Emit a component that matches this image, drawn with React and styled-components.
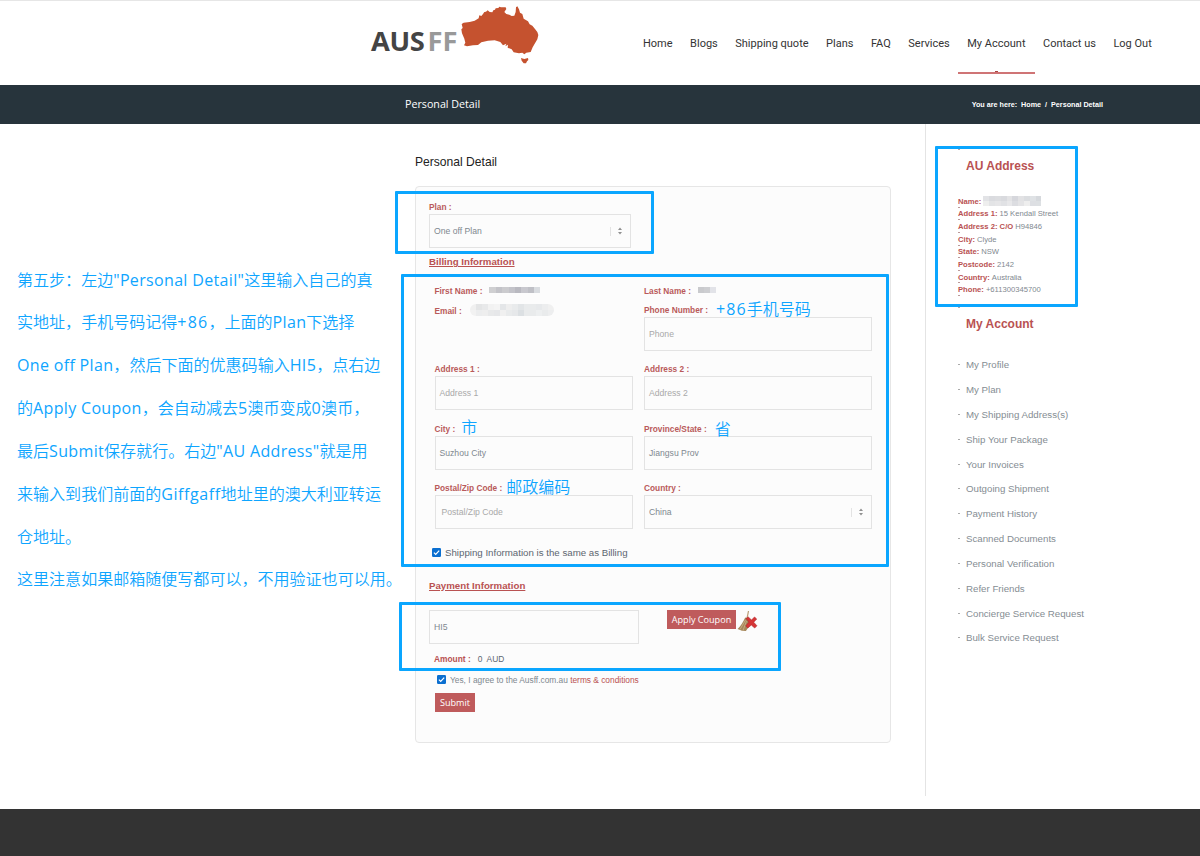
import React from "react";
import styled, { createGlobalStyle, css } from "styled-components";

const GlobalStyle = createGlobalStyle`
  * {
    box-sizing: border-box;
  }
  body {
    margin: 0;
    background: #fff;
    font-family: "Liberation Sans", Arial, sans-serif;
  }
`;

const Page = styled.div`
  position: relative;
  width: 1200px;
  height: 856px;
  overflow: hidden;
  display: flex;
  flex-direction: column;
`;

const Header = styled.header`
  height: 85px;
  flex-shrink: 0;
  display: flex;
  border-top: 1px solid #e6e6e6;
  padding-left: 370px;
`;

const Logo = styled.div`
  display: flex;
  width: 273px;
  padding-top: 4px;
`;

const LogoText = styled.div`
  width: 90px;
  padding: 17px 0 0 1px;
  font: 700 27.3px/38px "Open Sans", sans-serif;
  letter-spacing: -0.3px;
  color: #444;
  white-space: nowrap;
`;

const LogoLight = styled.span`
  margin-left: 3px;
  font-weight: 700;
  letter-spacing: -0.2px;
  color: #999;
`;

const Nav = styled.nav`
  display: flex;
  gap: 17.5px;
  height: 73px;
`;

const NavItem = styled.a`
  font: 400 11px/85px Roboto, sans-serif;
  color: #333;
  white-space: nowrap;
  ${({ $active }) =>
    $active &&
    css`
      margin: 0 -9px;
      padding: 0 9px;
      border-bottom: 2px solid #cf7475;
      background: linear-gradient(#a94442, #a94442) 50% 100% / 3px 1px no-repeat;
    `}
`;

const TitleBar = styled.div`
  height: 39px;
  flex-shrink: 0;
  display: flex;
  justify-content: space-between;
  padding: 0 97px 0 405px;
  background: #27343c;
  color: #fff;
`;

const BarTitle = styled.div`
  font: 400 10.7px/39px "Open Sans", sans-serif;
`;

const Crumbs = styled.div`
  display: flex;
  gap: 4px;
  font-size: 7.2px;
  font-weight: 700;
  line-height: 39px;
`;

const Main = styled.main`
  display: flex;
  height: 672px;
  flex-shrink: 0;
`;

const Note = styled.div`
  width: 415px;
  padding: 134.5px 0 0 17px;
  color: #0ea5ff;
  font: 400 16.05px/42.85px "Open Sans", "Noto Sans CJK SC", sans-serif;
  font-weight: 350;
  white-space: nowrap;
`;

const Latin = styled.span`
  font-weight: 400;
  letter-spacing: ${({ $ls }) => $ls || 0.32}px;
`;

const Content = styled.section`
  width: 509.5px;
  padding-top: 29px;
`;

const Heading = styled.h1`
  margin: 0;
  height: 33px;
  font-size: 12.1px;
  font-weight: 400;
  line-height: 18px;
  color: #222;
`;

const Card = styled.form`
  width: 476px;
  height: 557px;
  border: 1px solid #e6e6e6;
  border-radius: 4px;
  background: #fcfcfc;
  padding-left: 13px;
  color: #7f8c94;
`;

const Label = styled.label`
  display: flex;
  align-items: flex-end;
  height: ${({ $h }) => $h || 25.4}px;
  font-size: 8.3px;
  font-weight: 700;
  line-height: 14px;
  color: #b95a5a;
  white-space: nowrap;
`;

const Box = styled.div`
  display: flex;
  align-items: center;
  justify-content: space-between;
  width: ${({ $w }) => $w || "100%"};
  height: 34px;
  padding: 0 8px 0 ${({ $pl }) => $pl || 4}px;
  border: 1px solid #e3e3e3;
  font-size: 8.65px;
  color: ${({ $empty }) => ($empty ? "#a9a9a9" : "#7f8990")};
`;

const ArrowWrap = styled.span`
  display: flex;
  align-items: center;
  height: 9px;
  padding-left: 7px;
  border-left: 1px solid #e3e3e3;
`;

const SectionTitle = styled.h2`
  margin: ${({ $mt }) => $mt || 0}px 0 0;
  height: ${({ $h }) => $h}px;
  font-size: 9.7px;
  line-height: ${({ $lh }) => $lh}px;
  color: #b95252;
  text-decoration: underline;
`;

const Fields = styled.div`
  display: grid;
  grid-template-columns: 198.5px 228px;
  column-gap: 11px;
  margin-left: 5.5px;
`;

const NameRow = styled(Fields)`
  height: 20px;
  margin-top: 6px;
`;

const Inline = styled.div`
  display: flex;
  align-items: center;
  gap: ${({ $gap }) => $gap || 7}px;
  height: 20px;
`;

const Hint = styled.span`
  position: relative;
  top: ${({ $top }) => $top || 0}px;
  margin-left: ${({ $ml }) => $ml}px;
  font: 400 16px/15px "Open Sans", "Noto Sans CJK SC", sans-serif;
  font-weight: 350;
  color: #0ea5ff;
`;

const Mosaic = styled.span`
  display: inline-flex;
  flex-wrap: wrap;
  width: ${({ $w }) => $w}px;
  height: ${({ $h }) => $h}px;
  border-radius: ${({ $r }) => $r || 0}px;
  overflow: hidden;
`;

const Tile = styled.i`
  width: ${({ $w }) => $w}px;
  height: ${({ $h }) => $h}px;
  background: ${({ $c }) => $c};
`;

const CheckRow = styled.div`
  display: flex;
  align-items: center;
  gap: 4px;
  height: ${({ $h }) => $h}px;
  margin: ${({ $mt }) => $mt}px 0 0 ${({ $ml }) => $ml}px;
  font-size: ${({ $fs }) => $fs}px;
  color: ${({ $c }) => $c};
`;

const Terms = styled.span`
  color: #b95252;
`;

const CouponRow = styled.div`
  display: flex;
  align-items: flex-start;
  margin-top: 16px;
`;

const Button = styled.button`
  width: ${({ $w }) => $w}px;
  height: 19px;
  margin: ${({ $m }) => $m};
  padding: 0;
  border: 0;
  background: #bf5b5c;
  color: #fff;
  font: 500 9.1px/19px "Open Sans", sans-serif;
  white-space: nowrap;
`;

const Amount = styled.div`
  display: flex;
  gap: 7px;
  height: 16px;
  margin: 7px 0 0 5px;
  font-size: 8.4px;
  line-height: 16px;
  color: #5d6670;
  white-space: pre;
`;

const Red = styled.b`
  color: #b95252;
`;

const Sidebar = styled.aside`
  flex: 1;
  padding: 23px 0 0 32.5px;
  border-left: 1px solid #e4e4e4;
`;

const SideTitle = styled.h3`
  position: relative;
  margin: 0;
  padding-left: 8px;
  height: 48px;
  font-size: 12px;
  line-height: 38px;
  color: #b95252;
  &::before {
    content: "";
    position: absolute;
    left: 0;
    top: 2px;
    width: 2px;
    height: 1px;
    background: #b9a5a5;
  }
`;

const AddressLine = styled.div`
  position: relative;
  display: flex;
  align-items: center;
  gap: 2px;
  height: 12.65px;
  font-size: 7.65px;
  color: #7f8990;
  white-space: nowrap;
  &::after {
    content: "";
    position: absolute;
    left: 0;
    bottom: 0;
    width: 2px;
    height: 1px;
    background: #b99;
  }
`;

const Addresses = styled.div`
  height: 110px;
`;

const MenuItem = styled.a`
  display: flex;
  align-items: center;
  gap: 6px;
  height: 24.83px;
  font-size: 9.7px;
  color: #858d93;
  &::before {
    content: "";
    width: 2px;
    height: 1px;
    background: #aaa;
  }
`;

const Menu = styled.div`
  margin-top: -0.6px;
`;

const Footer = styled.footer`
  flex: 1;
  margin-top: 13px;
  background: #333;
`;

const Highlight = styled.div`
  position: absolute;
  left: ${({ $x }) => $x}px;
  top: ${({ $y }) => $y}px;
  width: ${({ $w }) => $w}px;
  height: ${({ $h }) => $h}px;
  border: 3px solid #0aa6ff;
  border-radius: 1px;
`;

const navItems = ["Home", "Blogs", "Shipping quote", "Plans", "FAQ", "Services", "My Account", "Contact us", "Log Out"];

const address = [
  ["Address 1:", "15 Kendall Street"],
  ["Address 2: C/O", "H94846"],
  ["City:", "Clyde"],
  ["State:", "NSW"],
  ["Postcode:", "2142"],
  ["Country:", "Australia"],
  ["Phone:", "+611300345700"],
];

const menu = [
  "My Profile",
  "My Plan",
  "My Shipping Address(s)",
  "Ship Your Package",
  "Your Invoices",
  "Outgoing Shipment",
  "Payment History",
  "Scanned Documents",
  "Personal Verification",
  "Refer Friends",
  "Concierge Service Request",
  "Bulk Service Request",
];

const highlights = [
  [395, 191, 259, 63],
  [401, 274, 488, 293],
  [399, 602, 382, 69],
  [935, 146, 143, 161],
];

const Pixels = ({ colors, w, h, tw, th, r }) => (
  <Mosaic $w={w} $h={h} $r={r}>
    {colors.map((c, i) => (
      <Tile key={i} $c={c} $w={tw} $h={th} />
    ))}
  </Mosaic>
);

const Australia = () => (
  <svg width="80" height="60" viewBox="301 15 240 180" fill="#c5522f">
    <path d="M306 72L312 68 330 66 345 62 357 55 359 46 365 48 370 42 374 36 379 35 384 31 390 36 398 37 401 31 406 29 408 25 416 24 419 20 424 22 438 22 440 27 434 36 440 42 449 44 456 48 464 47 468 36 469 22 473 19 478 28 481 38 488 42 492 56 505 64 510 73 518 77 526 87 533 96 536 105 533 118 526 130 519 142 513 156 500 158 494 163 488 158 478 160 462 157 456 148 444 143 445 134 437 139 440 131 430 136 422 126 405 121 385 122 365 127 355 135 340 136 322 139 313 136 317 128 314 116 307 100 305 88 309 84z" />
    <path d="M484 174L494 177 505 174 506 180 502 184 499 190 492 190 486 182z" />
  </svg>
);

const Arrows = () => (
  <ArrowWrap>
    <svg width="4" height="8" viewBox="0 0 4 8" fill="#909090">
      <path d="M0 3L2 .6 4 3zM0 5l2 2.4L4 5z" />
    </svg>
  </ArrowWrap>
);

const Check = () => (
  <svg width="9" height="9" viewBox="0 0 9 9">
    <rect width="9" height="9" rx="1.2" fill="#0b6fd0" />
    <path d="M1.9 4.7l1.8 1.8L7.2 2.6" fill="none" stroke="#fff" strokeWidth="1.2" />
  </svg>
);

const Broom = () => (
  <svg width="22" height="22" viewBox="0 0 22 22">
    <path d="M11.5 1l-1.6 8" stroke="#b79a72" strokeWidth="1.2" />
    <path d="M8.2 7.5l3.2 1.2 2.5 5-5 7.200-4-.2L.6 19c3.400-3.100 5.500-7 7.600-11.500z" fill="#a5875b" />
    <path d="M8.5 10L3 19.5M9.5 11L6 20.5" stroke="#d0b98f" strokeWidth=".7" />
    <path d="M9 8.5l2.3-1.5 3.200 3 3-3 2.200 2-3 3.200 3.200 3.600-2.200 2.200-3.400-3-3.500 3-2-2.200 3.200-3.700z" fill="#d53536" stroke="#b42429" strokeWidth=".6" />
  </svg>
);

const App = () => {
  return (
    <Page>
      <GlobalStyle />
      <Header>
        <Logo>
          <LogoText>
            AUS<LogoLight>FF</LogoLight>
          </LogoText>
          <Australia />
        </Logo>
        <Nav>
          {navItems.map((item) => (
            <NavItem key={item} $active={item === "My Account"}>
              {item}
            </NavItem>
          ))}
        </Nav>
      </Header>
      <TitleBar>
        <BarTitle>Personal Detail</BarTitle>
        <Crumbs>
          <span>You are here:</span>
          <span>Home</span>
          <span>/</span>
          <span>Personal Detail</span>
        </Crumbs>
      </TitleBar>
      <Main>
        <Note>
          <div>第五步：左边<Latin>"Personal Detail"</Latin>这里输入自己的真</div>
          <div>实地址，手机号码记得<Latin $ls={1.2}>+86</Latin>，上面的<Latin>Plan</Latin>下选择</div>
          <div><Latin>One off Plan</Latin>，然后下面的优惠码输入<Latin>HI5</Latin>，点右边</div>
          <div>的<Latin>Apply Coupon</Latin>，会自动减去<Latin>5</Latin>澳币变成<Latin>0</Latin>澳币，</div>
          <div>最后<Latin>Submit</Latin>保存就行。右边<Latin>"AU Address"</Latin>就是用</div>
          <div>来输入到我们前面的<Latin $ls={0.55}>Giffgaff</Latin>地址里的澳大利亚转运</div>
          <div>仓地址。</div>
          <div>这里注意如果邮箱随便写都可以，不用验证也可以用。</div>
        </Note>
        <Content>
          <Heading>Personal Detail</Heading>
          <Card>
            <Label $h={27}>Plan :</Label>
            <Box $w="202px">
              One off Plan <Arrows />
            </Box>
            <SectionTitle $h={26} $lh={27}>Billing Information</SectionTitle>
            <NameRow>
              <Inline>
                <Label $h={15}>First Name :</Label>
                <Pixels w={51} h={6} tw={6.375} th={6} colors={["#cfcfd1", "#c3c3c8", "#cbcbce", "#c3c3c9", "#b9b9c0", "#c8c8ce", "#bfc0c6", "#d9dce0"]} />
              </Inline>
              <Inline>
                <Label $h={15}>Last Name :</Label>
                <Pixels w={18} h={6} tw={6} th={6} colors={["#c9cacd", "#cdced1", "#e2e3e8"]} />
              </Inline>
            </NameRow>
            <Fields>
              <Inline $gap={8}>
                <Label $h={15}>Email :</Label>
                <Pixels w={84} h={12} tw={6} th={6} r={6} colors={["#f0f0f0", "#e4e5e6", "#e8e9ea", "#f2f2f2", "#f4f4f4", "#e4e6e8", "#eee", "#e9ebec", "#e2e5e7", "#e9ebec", "#e9ebec", "#e7e9eb", "#ecedee", "#f0f0f0", "#f2f2f2", "#ecedee", "#eee", "#e8e9ea", "#e6e7e9", "#f0f0f0", "#e9ebec", "#e6e8ea", "#dce0e3", "#e9ebec", "#e9ebec", "#edeff0", "#e9ebec", "#edeeef"]} />
              </Inline>
              <div>
                <Label $h={17}>
                  Phone Number :
                  <Hint $ml={8}>
                    <Latin $ls={1.1}>+86</Latin>手机号码
                  </Hint>
                </Label>
                <Box $empty>Phone</Box>
              </div>
              <div>
                <Label>Address 1 :</Label>
                <Box $empty>Address 1</Box>
              </div>
              <div>
                <Label>Address 2 :</Label>
                <Box $empty>Address 2</Box>
              </div>
              <div>
                <Label>
                  City :<Hint $ml={6} $top={-1}>市</Hint>
                </Label>
                <Box>Suzhou City</Box>
              </div>
              <div>
                <Label>
                  Province/State :<Hint $ml={8} $top={1}>省</Hint>
                </Label>
                <Box>Jiangsu Prov</Box>
              </div>
              <div>
                <Label>
                  Postal/Zip Code :<Hint $ml={4}>邮政编码</Hint>
                </Label>
                <Box $empty $pl={6}>Postal/Zip Code</Box>
              </div>
              <div>
                <Label>Country :</Label>
                <Box>
                  China <Arrows />
                </Box>
              </div>
            </Fields>
            <CheckRow $h={18} $mt={14.7} $ml={3} $fs={9.7} $c="#5d6670">
              <Check />
              Shipping Information is the same as Billing
            </CheckRow>
            <SectionTitle $h={16} $lh={16} $mt={16}>Payment Information</SectionTitle>
            <CouponRow>
              <Box $w="210px">HI5</Box>
              <Button type="button" $w={69} $m="0 1px 0 28px">Apply Coupon</Button>
              <Broom />
            </CouponRow>
            <Amount>
              <Red>Amount :</Red>
              <span>0  AUD</span>
            </Amount>
            <CheckRow $h={16} $mt={5} $ml={8} $fs={8.35} $c="#7f8990">
              <Check />
              <span>
                Yes, I agree to the Ausff.com.au <Terms>terms &amp; conditions</Terms>
              </span>
            </CheckRow>
            <Button type="button" $w={40} $m="5px 0 0 6px">Submit</Button>
          </Card>
        </Content>
        <Sidebar>
          <SideTitle>AU Address</SideTitle>
          <Addresses>
            <AddressLine>
              <Red>Name:</Red>
              <Pixels w={58} h={10} tw={5.8} th={5} colors={["#e2e3e6", "#dadbdf", "#dcdde0", "#d9dade", "#e3e3e5", "#d6d7dc", "#e2e2e4", "#dbdde0", "#dfe2e5", "#d6d9dd", "#eee", "#e3e4e6", "#e6e6e8", "#e1e2e5", "#e8e8ea", "#dcdde1", "#e4e4e6", "#eee", "#dddfe3", "#dde0e3"]} />
            </AddressLine>
            {address.map(([label, value]) => (
              <AddressLine key={label}>
                <Red>{label}</Red>
                <span>{value}</span>
              </AddressLine>
            ))}
          </Addresses>
          <SideTitle>My Account</SideTitle>
          <Menu>
            {menu.map((item) => (
              <MenuItem key={item}>{item}</MenuItem>
            ))}
          </Menu>
        </Sidebar>
      </Main>
      <Footer />
      {highlights.map(([x, y, w, h]) => (
        <Highlight key={y} $x={x} $y={y} $w={w} $h={h} />
      ))}
    </Page>
  );
};

export default App;
